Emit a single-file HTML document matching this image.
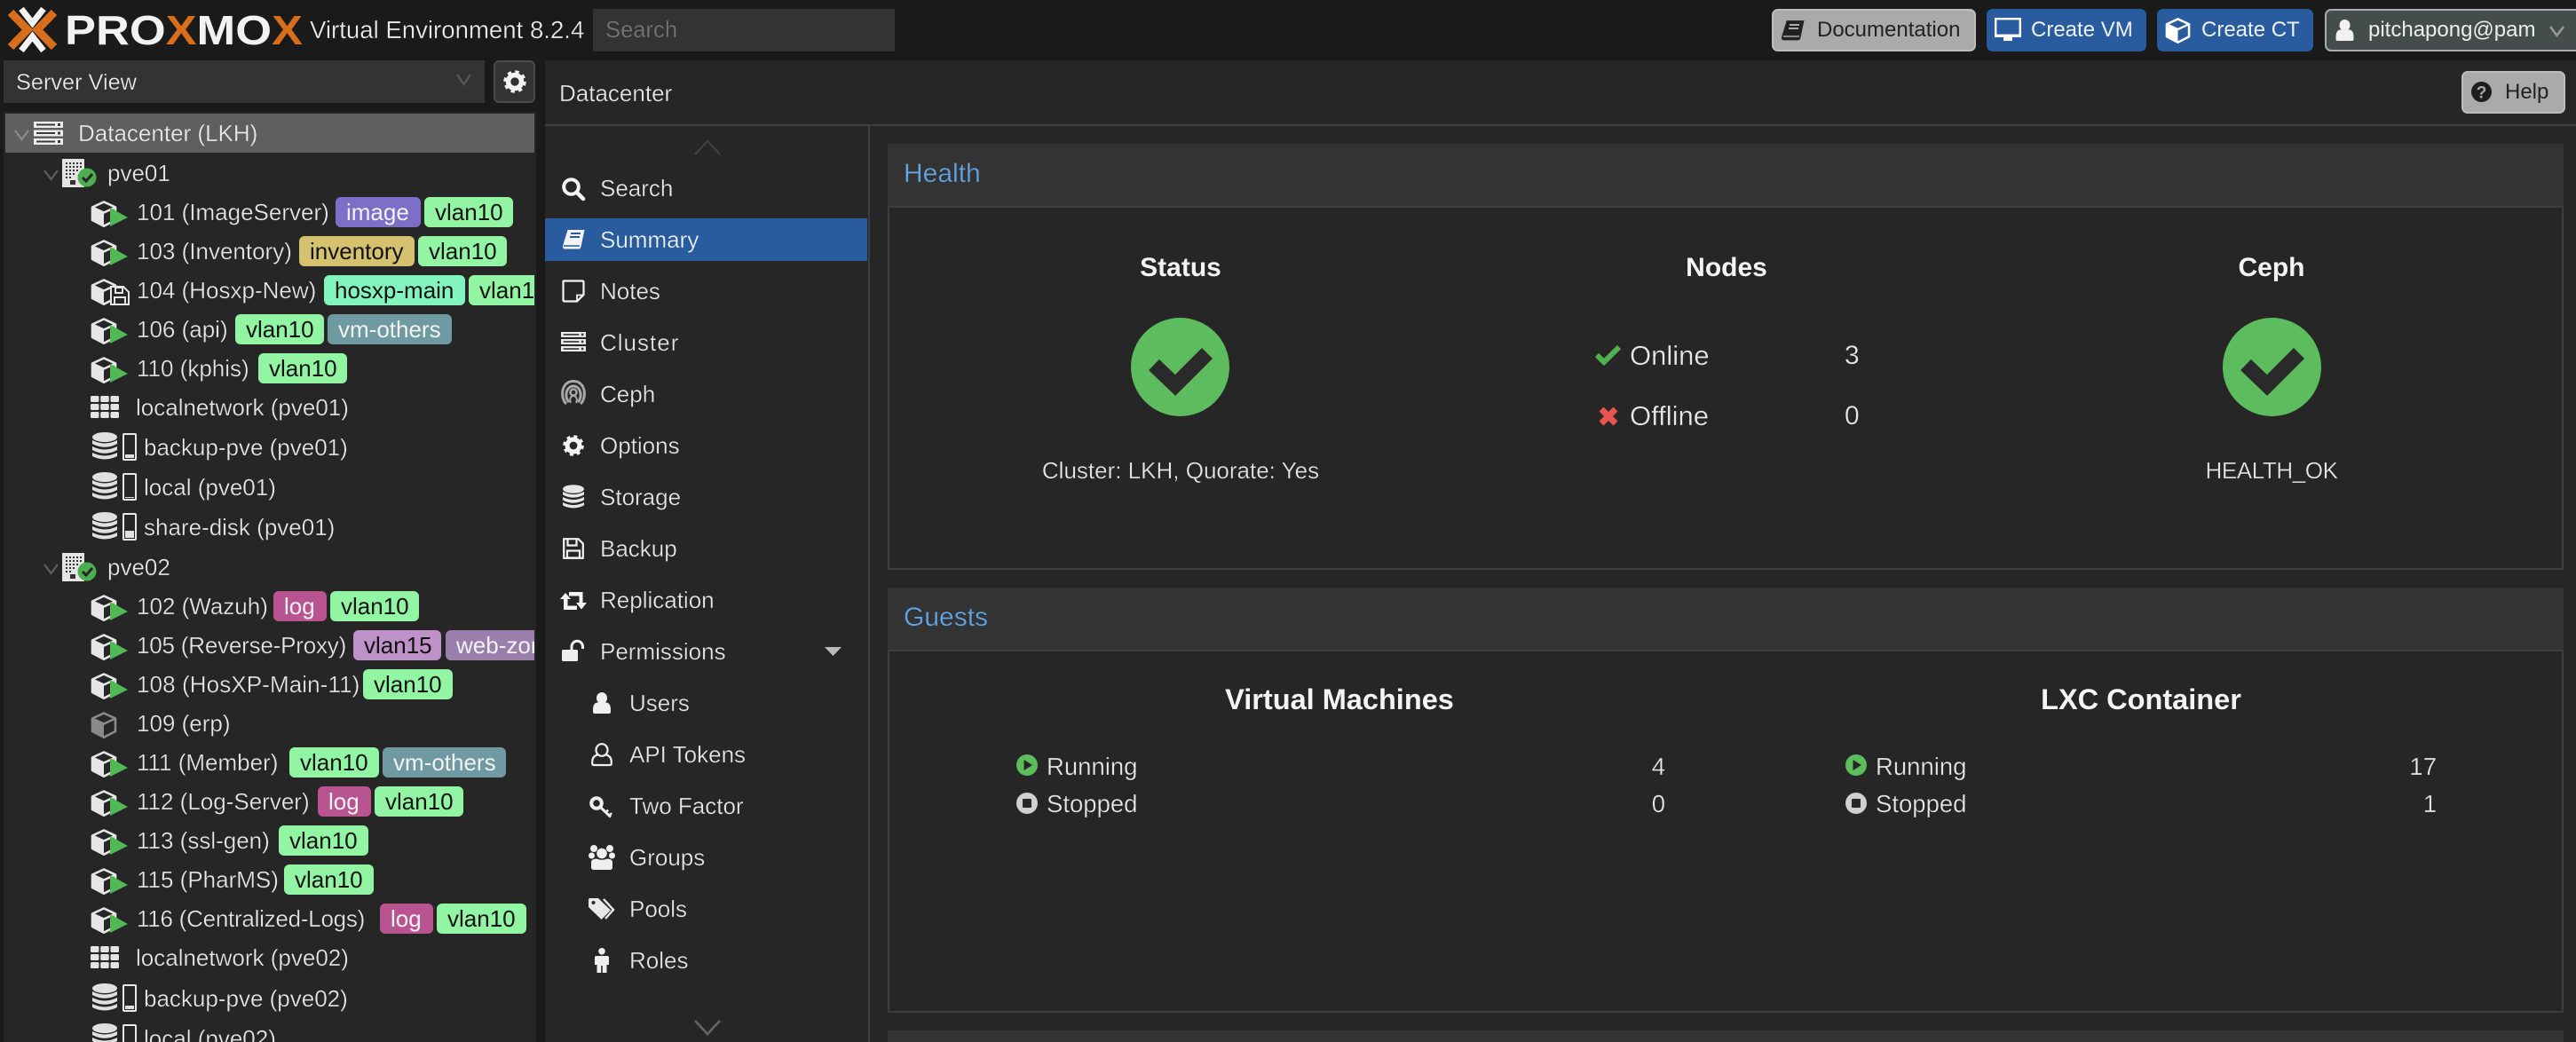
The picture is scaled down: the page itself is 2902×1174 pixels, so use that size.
<!DOCTYPE html>
<html lang="en"><head><meta charset="utf-8"><title>Proxmox Virtual Environment</title>
<style>
html,body{margin:0;padding:0;background:#1a1a1a;width:2902px;height:1174px;overflow:hidden}
body{position:relative;font-family:"Liberation Sans",Arial,sans-serif;font-size:26px;color:#e8e8e8}
.a{position:absolute}
.t{position:absolute;white-space:nowrap;line-height:44px;height:44px;-webkit-text-stroke:.35px #262626}
.tag{position:absolute;height:34px;line-height:34px;border-radius:6px;white-space:nowrap;overflow:hidden;padding-left:12px;box-sizing:border-box;color:#111}
.g{background:#92f5a3}.w{color:#f2f2f2}
svg{position:absolute;overflow:visible}
.btn{position:absolute;box-sizing:border-box;border-radius:7px;top:10px;height:48px;line-height:44px;font-size:24px;white-space:nowrap}
.b{font-weight:bold;color:#f4f4f4;font-size:30px;-webkit-text-stroke:0}
</style></head><body>
<svg width="0" height="0" style="position:absolute">
<defs>
<symbol id="cube" viewBox="0 0 30 30" overflow="visible"><path d="M15 1.5 28 7.5V22L15 28.7 2 22V7.5Z" fill="none" stroke="currentColor" stroke-width="2.6" stroke-linejoin="round"/><path d="M2 8 15 14V28.7L2 22Z" fill="currentColor"/><path d="M2 7.5 15 13.5 28 7.5" fill="none" stroke="currentColor" stroke-width="2.4"/></symbol>
<symbol id="db" viewBox="0 0 28 32"><g fill="currentColor"><ellipse cx="14" cy="5.5" rx="14" ry="5.5"/><path d="M0 9Q14 16 28 9V13Q14 20.500 0 13Z"/><path d="M0 16Q14 23 28 16V20Q14 27.500 0 20Z"/><path d="M0 23Q14 30 28 23V27Q14 34 0 27Z"/></g></symbol>
<symbol id="srv" viewBox="0 0 33 26"><g fill="currentColor"><rect width="33" height="7"/><rect y="9.500" width="33" height="7"/><rect y="19" width="33" height="7"/></g><g fill="#3a3a3a"><rect x="3" y="2.500" width="21" height="2"/><rect x="3" y="12" width="21" height="2"/><rect x="3" y="21.500" width="21" height="2"/><rect x="27" y="2" width="3" height="3"/><rect x="27" y="11.500" width="3" height="3"/><rect x="27" y="21" width="3" height="3"/></g></symbol>
<symbol id="bld" viewBox="0 0 46 34"><rect width="25" height="32" fill="#e4e4e4"/><g fill="#333"><path d="M4 4h2v2H4zM8 4h2v2H8zM12 4h2v2h-2zM16 4h2v2h-2zM20 4h2v2h-2zM4 8h2v2H4zM8 8h2v2H8zM12 8h2v2h-2zM16 8h2v2h-2zM20 8h2v2h-2zM4 12h2v2H4zM8 12h2v2H8zM12 12h2v2h-2zM16 12h2v2h-2zM4 16h2v2H4zM8 16h2v2H8zM12 16h2v2h-2zM4 20h2v2H4zM8 20h2v2H8z"/><rect x="9" y="24" width="6" height="5"/></g><circle cx="28" cy="21" r="10.500" fill="#4cae50"/><path d="M23 21l4 4 7-8" fill="none" stroke="#262626" stroke-width="3"/></symbol>
<symbol id="grid" viewBox="0 0 32 25"><g fill="#e4e4e4"><rect width="9.500" height="7" rx="1.500"/><rect x="11.250" width="9.500" height="7" rx="1.500"/><rect x="22.500" width="9.500" height="7" rx="1.500"/><rect y="9" width="9.500" height="7" rx="1.500"/><rect x="11.250" y="9" width="9.500" height="7" rx="1.500"/><rect x="22.500" y="9" width="9.500" height="7" rx="1.500"/><rect y="18" width="9.500" height="7" rx="1.500"/><rect x="11.250" y="18" width="9.500" height="7" rx="1.500"/><rect x="22.500" y="18" width="9.500" height="7" rx="1.500"/></g></symbol>
<symbol id="chk" viewBox="0 0 111 111"><circle cx="55.500" cy="55.500" r="55.500" fill="#5cbc5e"/><path d="M26 53 50 76 86 40" fill="none" stroke="#2a2a2a" stroke-width="17" stroke-linejoin="miter"/></symbol>
<symbol id="vm" viewBox="0 0 42 30" overflow="visible"><use href="#cube" width="30" height="30" color="#e6e6e6"/><path d="M22 8 42 19 22 29Z" fill="#52b755"/></symbol>
<symbol id="book" viewBox="0 0 26 24"><path d="M6.500 1H25.500L21.500 20Q21 22.500 18.500 22.500H3.500Q.5 22.500 1 19Z" fill="currentColor"/></symbol>
<symbol id="person" viewBox="0 0 20 24"><ellipse cx="10" cy="6.500" rx="6" ry="6.500" fill="currentColor"/><path d="M0 20Q0 11 6 11.500 10 14 14 11.500 20 11 20 20V22Q20 24 18 24H2Q0 24 0 22Z" fill="currentColor"/></symbol>
</defs>
</svg>

<!-- top bar -->
<svg class="a" style="left:0;top:0" width="360" height="68">
<g fill="none" stroke-linejoin="miter">
<path d="M12 14 31 33.500 12 53" stroke="#d86e1c" stroke-width="9"/>
<path d="M61 14 42 33.500 61 53" stroke="#d86e1c" stroke-width="9"/>
<path d="M24 10 36.500 26 49 10" stroke="#f4f4f4" stroke-width="7"/>
<path d="M24 57 36.500 41 49 57" stroke="#f4f4f4" stroke-width="7"/>
</g>
<text x="73" y="50" font-family="Liberation Sans" font-weight="bold" font-size="46" fill="#f2f2f2" textLength="268" lengthAdjust="spacingAndGlyphs">PRO<tspan fill="#d86e1c">X</tspan>MO<tspan fill="#d86e1c">X</tspan></text>
</svg>
<div class="t" style="left:349px;top:12px;font-size:27.6px;color:#ededed;-webkit-text-stroke-color:#1a1a1a">Virtual Environment 8.2.4</div>
<div class="a" style="left:668px;top:10px;width:340px;height:48px;background:#333"></div>
<div class="t" style="left:682px;top:12px;font-size:25.600px;color:#777;-webkit-text-stroke-color:#333">Search</div>

<div class="btn" style="left:1996px;width:230px;background:#aaa;border:2px solid #bdbdbd;color:#222"><span class="a" style="left:49px;top:0">Documentation</span></div>
<svg style="left:2006px;top:22px" width="27" height="25"><use href="#book" width="27" height="25" color="#222"/><path d="M10 6h11M9 10h11" stroke="#aaa" stroke-width="2"/><path d="M3 19H21" stroke="#aaa" stroke-width="1.500"/></svg>
<div class="btn" style="left:2238px;width:180px;background:#295c9e;color:#f0f0f0"><span class="a" style="left:50px;top:2px">Create VM</span></div>
<svg style="left:2247px;top:20px" width="30" height="27"><rect x="1.200" y="1.200" width="27.600" height="18.600" fill="none" stroke="#fff" stroke-width="2.400"/><rect y="19" width="30" height="3" fill="#fff"/><rect x="10" y="22" width="10" height="4" fill="#fff"/></svg>
<div class="btn" style="left:2430px;width:176px;background:#295c9e;color:#f0f0f0"><span class="a" style="left:50px;top:2px">Create CT</span></div>
<svg style="left:2439px;top:20px" width="29" height="29"><use href="#cube" width="29" height="29" color="#fff"/></svg>
<div class="btn" style="left:2619px;width:290px;background:#454c4c;border:2px solid #a9adad;color:#ededed"><span class="a" style="left:47px;top:0">pitchapong@pam</span></div>
<svg style="left:2631px;top:22px" width="21" height="24"><use href="#person" width="21" height="24" color="#f2f2f2"/></svg>
<svg style="left:2871px;top:28px" width="19" height="14"><path d="M2 2 9.500 12 17 2" fill="none" stroke="#999" stroke-width="2.500"/></svg>

<!-- left panel -->
<div class="a" style="left:4px;top:68px;width:542px;height:48px;background:#333"></div>
<div class="t" style="left:18px;top:71px;font-size:25.300px;color:#eee;-webkit-text-stroke-color:#333">Server View</div>
<svg style="left:513px;top:83px" width="19" height="14"><path d="M2 1 9.500 12 17 1" fill="none" stroke="#555" stroke-width="2.500"/></svg>
<div class="a" style="left:556px;top:68px;width:47px;height:48px;box-sizing:border-box;background:#333;border:2px solid #4a4a4a;border-radius:6px"></div>
<svg style="left:567px;top:79px" width="26" height="26" viewBox="0 0 26 26"><circle cx="13" cy="13" r="7.500" fill="none" stroke="#f4f4f4" stroke-width="5.500"/><circle cx="13" cy="13" r="11" fill="none" stroke="#f4f4f4" stroke-width="3.500" stroke-dasharray="4.300 4.340"/></svg>

<div class="a" style="left:4px;top:126px;width:600px;height:1048px;background:#262626"></div>
<div class="a" style="left:0;top:0;width:602px;height:1174px;overflow:hidden">
<div class="a" style="left:6px;top:128px;width:596px;height:44px;background:#5f5f5f"></div>
<svg style="left:15px;top:145px" width="19" height="14"><path d="M2 2 9.500 12 17 2" fill="none" stroke="#8a8a8a" stroke-width="2.200"/></svg>
<svg style="left:38px;top:137px" width="33" height="26"><use href="#srv" width="33" height="26" color="#ededed"/></svg>
<div class="t" style="left:88px;top:128px;color:#ebebeb;-webkit-text-stroke-color:#5f5f5f">Datacenter (LKH)</div>

<svg style="left:48px;top:190px" width="19" height="14"><path d="M2 2 9.500 12 17 2" fill="none" stroke="#5e5e5e" stroke-width="2.200"/></svg>
<svg style="left:70px;top:179px" width="46" height="34"><use href="#bld" width="46" height="34"/></svg>
<div class="t" style="left:121px;top:173px">pve01</div>

<svg style="left:102px;top:226px" width="42" height="30"><use href="#vm" width="42" height="30"/></svg>
<div class="t" style="left:154px;top:217px">101 (ImageServer)</div>
<div class="tag w" style="left:378px;top:222px;width:96px;background:#7d6ec8">image</div>
<div class="tag g" style="left:478px;top:222px;width:100px">vlan10</div>

<svg style="left:102px;top:270px" width="42" height="30"><use href="#vm" width="42" height="30"/></svg>
<div class="t" style="left:154px;top:261px">103 (Inventory)</div>
<div class="tag" style="left:337px;top:266px;width:130px;background:#d4c26f">inventory</div>
<div class="tag g" style="left:471px;top:266px;width:100px">vlan10</div>

<svg style="left:102px;top:314px" width="30" height="30"><use href="#cube" width="30" height="30" color="#e6e6e6"/></svg>
<svg style="left:124px;top:322px" width="22" height="22"><path d="M1 1H15L21 7V21H1Z" fill="#262626" stroke="#e6e6e6" stroke-width="2"/><rect x="6" y="2" width="8" height="6" fill="none" stroke="#e6e6e6" stroke-width="2"/><rect x="5" y="13" width="12" height="8" fill="none" stroke="#e6e6e6" stroke-width="2"/></svg>
<div class="t" style="left:154px;top:305px">104 (Hosxp-New)</div>
<div class="tag" style="left:365px;top:310px;width:159px;background:#82f5bf">hosxp-main</div>
<div class="tag g" style="left:528px;top:310px;width:100px">vlan10</div>

<svg style="left:102px;top:358px" width="42" height="30"><use href="#vm" width="42" height="30"/></svg>
<div class="t" style="left:154px;top:349px">106 (api)</div>
<div class="tag g" style="left:265px;top:354px;width:100px">vlan10</div>
<div class="tag w" style="left:369px;top:354px;width:140px;background:#6f9aa2">vm-others</div>

<svg style="left:102px;top:402px" width="42" height="30"><use href="#vm" width="42" height="30"/></svg>
<div class="t" style="left:154px;top:393px">110 (kphis)</div>
<div class="tag g" style="left:291px;top:398px;width:100px">vlan10</div>

<svg style="left:102px;top:446px" width="32" height="25"><use href="#grid" width="32" height="25"/></svg>
<div class="t" style="left:153px;top:437px">localnetwork (pve01)</div>

<svg style="left:104px;top:487px" width="28" height="32"><use href="#db" width="28" height="32" color="#e0e0e0"/></svg>
<svg style="left:138px;top:488px" width="16" height="31"><rect x="1" y="1" width="14" height="29" rx="1" fill="none" stroke="#e8e8e8" stroke-width="2"/><rect x="3" y="24" width="10" height="4" fill="#e0e0e0"/></svg>
<div class="t" style="left:162px;top:482px">backup-pve (pve01)</div>

<svg style="left:104px;top:532px" width="28" height="32"><use href="#db" width="28" height="32" color="#e0e0e0"/></svg>
<svg style="left:138px;top:533px" width="16" height="31"><rect x="1" y="1" width="14" height="29" rx="1" fill="none" stroke="#e8e8e8" stroke-width="2"/><rect x="3" y="27" width="10" height="1" fill="#e0e0e0"/></svg>
<div class="t" style="left:162px;top:527px">local (pve01)</div>

<svg style="left:104px;top:577px" width="28" height="32"><use href="#db" width="28" height="32" color="#e0e0e0"/></svg>
<svg style="left:138px;top:578px" width="16" height="31"><rect x="1" y="1" width="14" height="29" rx="1" fill="none" stroke="#e8e8e8" stroke-width="2"/><rect x="3" y="20" width="10" height="8" fill="#e0e0e0"/></svg>
<div class="t" style="left:162px;top:572px">share-disk (pve01)</div>

<svg style="left:48px;top:634px" width="19" height="14"><path d="M2 2 9.500 12 17 2" fill="none" stroke="#5e5e5e" stroke-width="2.200"/></svg>
<svg style="left:70px;top:623px" width="46" height="34"><use href="#bld" width="46" height="34"/></svg>
<div class="t" style="left:121px;top:617px">pve02</div>

<svg style="left:102px;top:670px" width="42" height="30"><use href="#vm" width="42" height="30"/></svg>
<div class="t" style="left:154px;top:661px">102 (Wazuh)</div>
<div class="tag w" style="left:308px;top:666px;width:60px;background:#b85591">log</div>
<div class="tag g" style="left:372px;top:666px;width:100px">vlan10</div>

<svg style="left:102px;top:714px" width="42" height="30"><use href="#vm" width="42" height="30"/></svg>
<div class="t" style="left:154px;top:705px;letter-spacing:-.2px">105 (Reverse-Proxy)</div>
<div class="tag" style="left:398px;top:710px;width:99px;background:#be92c8">vlan15</div>
<div class="tag w" style="left:502px;top:710px;width:150px;background:#9a7eab">web-zone</div>

<svg style="left:102px;top:758px" width="42" height="30"><use href="#vm" width="42" height="30"/></svg>
<div class="t" style="left:154px;top:749px;letter-spacing:.1px">108 (HosXP-Main-11)</div>
<div class="tag g" style="left:409px;top:754px;width:101px">vlan10</div>

<svg style="left:102px;top:802px" width="30" height="30"><use href="#cube" width="30" height="30" color="#8a8a8a"/></svg>
<div class="t" style="left:154px;top:793px">109 (erp)</div>

<svg style="left:102px;top:846px" width="42" height="30"><use href="#vm" width="42" height="30"/></svg>
<div class="t" style="left:154px;top:837px">111 (Member)</div>
<div class="tag g" style="left:326px;top:842px;width:101px">vlan10</div>
<div class="tag w" style="left:431px;top:842px;width:139px;background:#6f9aa2">vm-others</div>

<svg style="left:102px;top:890px" width="42" height="30"><use href="#vm" width="42" height="30"/></svg>
<div class="t" style="left:154px;top:881px">112 (Log-Server)</div>
<div class="tag w" style="left:358px;top:886px;width:60px;background:#b85591">log</div>
<div class="tag g" style="left:422px;top:886px;width:100px">vlan10</div>

<svg style="left:102px;top:934px" width="42" height="30"><use href="#vm" width="42" height="30"/></svg>
<div class="t" style="left:154px;top:925px">113 (ssl-gen)</div>
<div class="tag g" style="left:314px;top:930px;width:101px">vlan10</div>

<svg style="left:102px;top:978px" width="42" height="30"><use href="#vm" width="42" height="30"/></svg>
<div class="t" style="left:154px;top:969px">115 (PharMS)</div>
<div class="tag g" style="left:320px;top:974px;width:101px">vlan10</div>

<svg style="left:102px;top:1022px" width="42" height="30"><use href="#vm" width="42" height="30"/></svg>
<div class="t" style="left:154px;top:1013px;letter-spacing:-.25px">116 (Centralized-Logs)</div>
<div class="tag w" style="left:428px;top:1018px;width:60px;background:#b85591">log</div>
<div class="tag g" style="left:492px;top:1018px;width:101px">vlan10</div>

<svg style="left:102px;top:1066px" width="32" height="25"><use href="#grid" width="32" height="25"/></svg>
<div class="t" style="left:153px;top:1057px">localnetwork (pve02)</div>

<svg style="left:104px;top:1108px" width="28" height="32"><use href="#db" width="28" height="32" color="#e0e0e0"/></svg>
<svg style="left:138px;top:1109px" width="16" height="31"><rect x="1" y="1" width="14" height="29" rx="1" fill="none" stroke="#e8e8e8" stroke-width="2"/><rect x="3" y="24" width="10" height="4" fill="#e0e0e0"/></svg>
<div class="t" style="left:162px;top:1103px">backup-pve (pve02)</div>

<svg style="left:104px;top:1153px" width="28" height="32"><use href="#db" width="28" height="32" color="#e0e0e0"/></svg>
<svg style="left:138px;top:1154px" width="16" height="31"><rect x="1" y="1" width="14" height="29" rx="1" fill="none" stroke="#e8e8e8" stroke-width="2"/></svg>
<div class="t" style="left:162px;top:1148px">local (pve02)</div>
</div>

<!-- right area -->
<div class="a" style="left:614px;top:68px;width:2288px;height:1106px;background:#262626"></div>
<div class="a" style="left:614px;top:140px;width:2288px;height:2px;background:#3d3d3d"></div>
<div class="a" style="left:978px;top:142px;width:2px;height:1032px;background:#3d3d3d"></div>
<div class="t" style="left:630px;top:83px;color:#e8e8e8">Datacenter</div>
<div class="btn" style="left:2773px;top:80px;width:117px;background:#aaa;border:2px solid #bdbdbd;color:#222"><span class="a" style="left:47px;top:0">Help</span></div>
<svg style="left:2784px;top:92px" width="23" height="23"><circle cx="11.500" cy="11.500" r="11.500" fill="#1d1d1d"/><text x="11.500" y="18.500" text-anchor="middle" font-family="Liberation Sans" font-weight="bold" font-size="19" fill="#aaa">?</text></svg>

<!-- nav -->
<svg style="left:782px;top:157px" width="30" height="18"><path d="M1 17 15 2 29 17" fill="none" stroke="#3d3d3d" stroke-width="2.500"/></svg>
<svg style="left:782px;top:1149px" width="30" height="18"><path d="M1 1 15 16 29 1" fill="none" stroke="#666" stroke-width="2.500"/></svg>
<div class="a" style="left:614px;top:246px;width:363px;height:48px;background:#295c9e"></div>

<svg style="left:633px;top:200px" width="26" height="26"><circle cx="10.500" cy="10.500" r="8.300" fill="none" stroke="#f4f4f4" stroke-width="4"/><path d="M17 17 24 24" stroke="#f4f4f4" stroke-width="4.500" stroke-linecap="round"/></svg>
<div class="t" style="left:676px;top:190px">Search</div>

<svg style="left:633px;top:258px" width="26" height="24"><use href="#book" width="26" height="24" color="#f4f4f4"/><path d="M10 5h11M9 9h11" stroke="#295c9e" stroke-width="2"/><path d="M2 19H20" stroke="#295c9e" stroke-width="1.500"/></svg>
<div class="t" style="left:676px;top:248px;color:#f4f4f4;-webkit-text-stroke-color:#295c9e">Summary</div>

<svg style="left:633px;top:315px" width="26" height="26"><path d="M2 1.500H23Q24.500 1.500 24.500 3V17L17 24.500H3Q1.500 24.500 1.500 23V2Z" fill="none" stroke="#f4f4f4" stroke-width="2.200"/><path d="M24 17.500H17V24" fill="none" stroke="#f4f4f4" stroke-width="1.800"/></svg>
<div class="t" style="left:676px;top:306px">Notes</div>

<svg style="left:632px;top:374px" width="28" height="22"><use href="#srv" width="28" height="22" color="#f0f0f0"/></svg>
<div class="t" style="left:676px;top:364px;letter-spacing:1px">Cluster</div>

<svg style="left:632px;top:428px" width="28" height="28" viewBox="0 0 28 28" fill="none" stroke="#a8a8a8"><path d="M6 27C-1 21-.5 1.500 14 1.500S29 21 22 27" stroke-width="3"/><path d="M9 25C3 19 6 7 14 7S25 19 19 25" stroke-width="3"/><circle cx="14" cy="14" r="3.500" stroke-width="2.500"/><path d="M11 26C9 22 11 18 14 18S19 22 17 26" stroke-width="2"/></svg>
<div class="t" style="left:676px;top:422px">Ceph</div>

<svg style="left:634px;top:490px" width="24" height="24" viewBox="0 0 26 26"><circle cx="13" cy="13" r="7.500" fill="none" stroke="#f4f4f4" stroke-width="5.500"/><circle cx="13" cy="13" r="11" fill="none" stroke="#f4f4f4" stroke-width="3.500" stroke-dasharray="4.300 4.340"/></svg>
<div class="t" style="left:676px;top:480px">Options</div>

<svg style="left:634px;top:546px" width="24" height="28"><use href="#db" width="24" height="28" color="#e6e6e6"/></svg>
<div class="t" style="left:676px;top:538px">Storage</div>

<svg style="left:634px;top:606px" width="24" height="24"><path d="M1.200 1.200H17.500L22.800 6.500V22.800H1.200Z" fill="none" stroke="#f4f4f4" stroke-width="2.200"/><path d="M5.500 1.500V8.500H15.500V1.500" fill="none" stroke="#f4f4f4" stroke-width="2.200"/><rect x="5" y="14.500" width="14" height="8" fill="none" stroke="#f4f4f4" stroke-width="2.200"/></svg>
<div class="t" style="left:676px;top:596px">Backup</div>

<svg style="left:631px;top:667px" width="30" height="20"><path d="M0 8 6 1 12 8H8.500V15.500H19V20H4V8ZM10 0H25.500V12H30L24 19.500 18 12H21.500V4.500H10Z" fill="#f4f4f4"/></svg>
<div class="t" style="left:676px;top:654px">Replication</div>

<svg style="left:633px;top:721px" width="26" height="24"><rect y="11" width="18" height="13" rx="1.500" fill="#eee"/><path d="M11 12V7.500A6 6 0 0 1 23.500 7.500V10" fill="none" stroke="#eee" stroke-width="3"/></svg>
<div class="t" style="left:676px;top:712px">Permissions</div>
<svg style="left:929px;top:729px" width="19" height="10"><path d="M0 0H19L9.500 10Z" fill="#bbb"/></svg>

<svg style="left:668px;top:780px" width="20" height="24"><use href="#person" width="20" height="24" color="#efefef"/></svg>
<div class="t" style="left:709px;top:770px">Users</div>

<svg style="left:666px;top:837px" width="24" height="26" fill="none" stroke="#efefef" stroke-width="2.200"><ellipse cx="12" cy="8" rx="6.500" ry="6.800"/><path d="M7 13.500Q1.200 15 1.200 21.500V23Q1.200 25 3 25H21Q22.800 25 22.800 23V21.500Q22.800 15 17 13.500"/></svg>
<div class="t" style="left:709px;top:828px">API Tokens</div>

<svg style="left:664px;top:897px" width="26" height="25" fill="none" stroke="#efefef"><circle cx="8" cy="8" r="5.800" stroke-width="4"/><path d="M12.500 12.500 24 23.500" stroke-width="3"/><path d="M21 15.500 18 19M25 19 22.500 22" stroke-width="2.500"/></svg>
<div class="t" style="left:709px;top:886px">Two Factor</div>

<svg style="left:663px;top:952px" width="30" height="28" fill="#efefef"><circle cx="6" cy="4" r="4"/><circle cx="24" cy="4" r="4"/><circle cx="3.500" cy="12" r="3.500"/><circle cx="26.500" cy="12" r="3.500"/><circle cx="15" cy="9.500" r="5.800"/><path d="M3 22V19Q3 16 9 15.500 15 18 21 15.500 27 16 27 19V25Q27 28 24 28H6Q3 28 3 25Z"/></svg>
<div class="t" style="left:709px;top:944px">Groups</div>

<svg style="left:663px;top:1012px" width="30" height="24"><path d="M1 0H11L25 13.500 14.500 24 0 10V1Z" fill="#e8e8e8"/><circle cx="5.500" cy="5" r="2" fill="#262626"/><path d="M17 1 28 13 19 23" fill="none" stroke="#e8e8e8" stroke-width="2.400"/></svg>
<div class="t" style="left:709px;top:1002px">Pools</div>

<svg style="left:670px;top:1068px" width="16" height="28" fill="#efefef"><circle cx="8" cy="3.800" r="3.800"/><path d="M2 9H14Q16 9 16 11V19H13.500V28H8.800V20H7.200V28H2.500V19H0V11Q0 9 2 9Z"/></svg>
<div class="t" style="left:709px;top:1060px">Roles</div>

<!-- health panel -->
<div class="a" style="left:1000px;top:162px;width:1888px;height:70px;background:#333"></div>
<div class="a" style="left:1000px;top:232px;width:1888px;height:410px;box-sizing:border-box;border:2px solid #3d3d3d"></div>
<div class="t" style="left:1018px;top:174px;font-size:30px;color:#62a6e8;-webkit-text-stroke-color:#333">Health</div>

<div class="t b" style="left:1130px;width:400px;text-align:center;top:280px">Status</div>
<svg style="left:1274px;top:358px" width="111" height="111"><use href="#chk" width="111" height="111"/></svg>
<div class="t" style="left:1130px;width:400px;text-align:center;top:508px">Cluster: LKH, Quorate: Yes</div>

<div class="t b" style="left:1745px;width:400px;text-align:center;top:280px">Nodes</div>
<svg style="left:1797px;top:389px" width="29" height="22"><path d="M2 11 10 19 27 2" fill="none" stroke="#4fb152" stroke-width="6"/></svg>
<div class="t" style="left:1836px;top:379px;font-size:31px">Online</div>
<div class="t" style="left:2078px;top:379px;font-size:30px">3</div>
<svg style="left:1801px;top:458px" width="22" height="22"><path d="M3 3 19 19M19 3 3 19" fill="none" stroke="#e8564e" stroke-width="7"/></svg>
<div class="t" style="left:1836px;top:447px;font-size:31px">Offline</div>
<div class="t" style="left:2078px;top:447px;font-size:30px">0</div>

<div class="t b" style="left:2359px;width:400px;text-align:center;top:280px">Ceph</div>
<svg style="left:2504px;top:358px" width="111" height="111"><use href="#chk" width="111" height="111"/></svg>
<div class="t" style="left:2359px;width:400px;text-align:center;top:508px;letter-spacing:-.4px">HEALTH_OK</div>

<!-- guests panel -->
<div class="a" style="left:1000px;top:662px;width:1888px;height:70px;background:#333"></div>
<div class="a" style="left:1000px;top:732px;width:1888px;height:409px;box-sizing:border-box;border:2px solid #3d3d3d"></div>
<div class="t" style="left:1018px;top:674px;font-size:30px;color:#62a6e8;-webkit-text-stroke-color:#333">Guests</div>

<div class="t b" style="left:1209px;width:600px;text-align:center;top:766px;font-size:32.500px">Virtual Machines</div>
<svg style="left:1145px;top:850px" width="24" height="24"><circle cx="12" cy="12" r="12" fill="#5cbc5e"/><path d="M8.500 6 18 12 8.500 18Z" fill="#262626"/></svg>
<div class="t" style="left:1179px;top:842px;font-size:27.500px">Running</div>
<div class="t" style="left:1676px;width:200px;text-align:right;top:842px;font-size:27.500px">4</div>
<svg style="left:1145px;top:893px" width="24" height="24"><circle cx="12" cy="12" r="12" fill="#cfcfcf"/><rect x="7" y="7" width="10" height="10" rx="1" fill="#262626"/></svg>
<div class="t" style="left:1179px;top:884px;font-size:27.500px">Stopped</div>
<div class="t" style="left:1676px;width:200px;text-align:right;top:884px;font-size:27.500px">0</div>

<div class="t b" style="left:2112px;width:600px;text-align:center;top:766px;font-size:32.500px">LXC Container</div>
<svg style="left:2079px;top:850px" width="24" height="24"><circle cx="12" cy="12" r="12" fill="#5cbc5e"/><path d="M8.500 6 18 12 8.500 18Z" fill="#262626"/></svg>
<div class="t" style="left:2113px;top:842px;font-size:27.500px">Running</div>
<div class="t" style="left:2545px;width:200px;text-align:right;top:842px;font-size:27.500px">17</div>
<svg style="left:2079px;top:893px" width="24" height="24"><circle cx="12" cy="12" r="12" fill="#cfcfcf"/><rect x="7" y="7" width="10" height="10" rx="1" fill="#262626"/></svg>
<div class="t" style="left:2113px;top:884px;font-size:27.500px">Stopped</div>
<div class="t" style="left:2545px;width:200px;text-align:right;top:884px;font-size:27.500px">1</div>

<div class="a" style="left:1000px;top:1161px;width:1888px;height:13px;background:#333"></div>
</body></html>
